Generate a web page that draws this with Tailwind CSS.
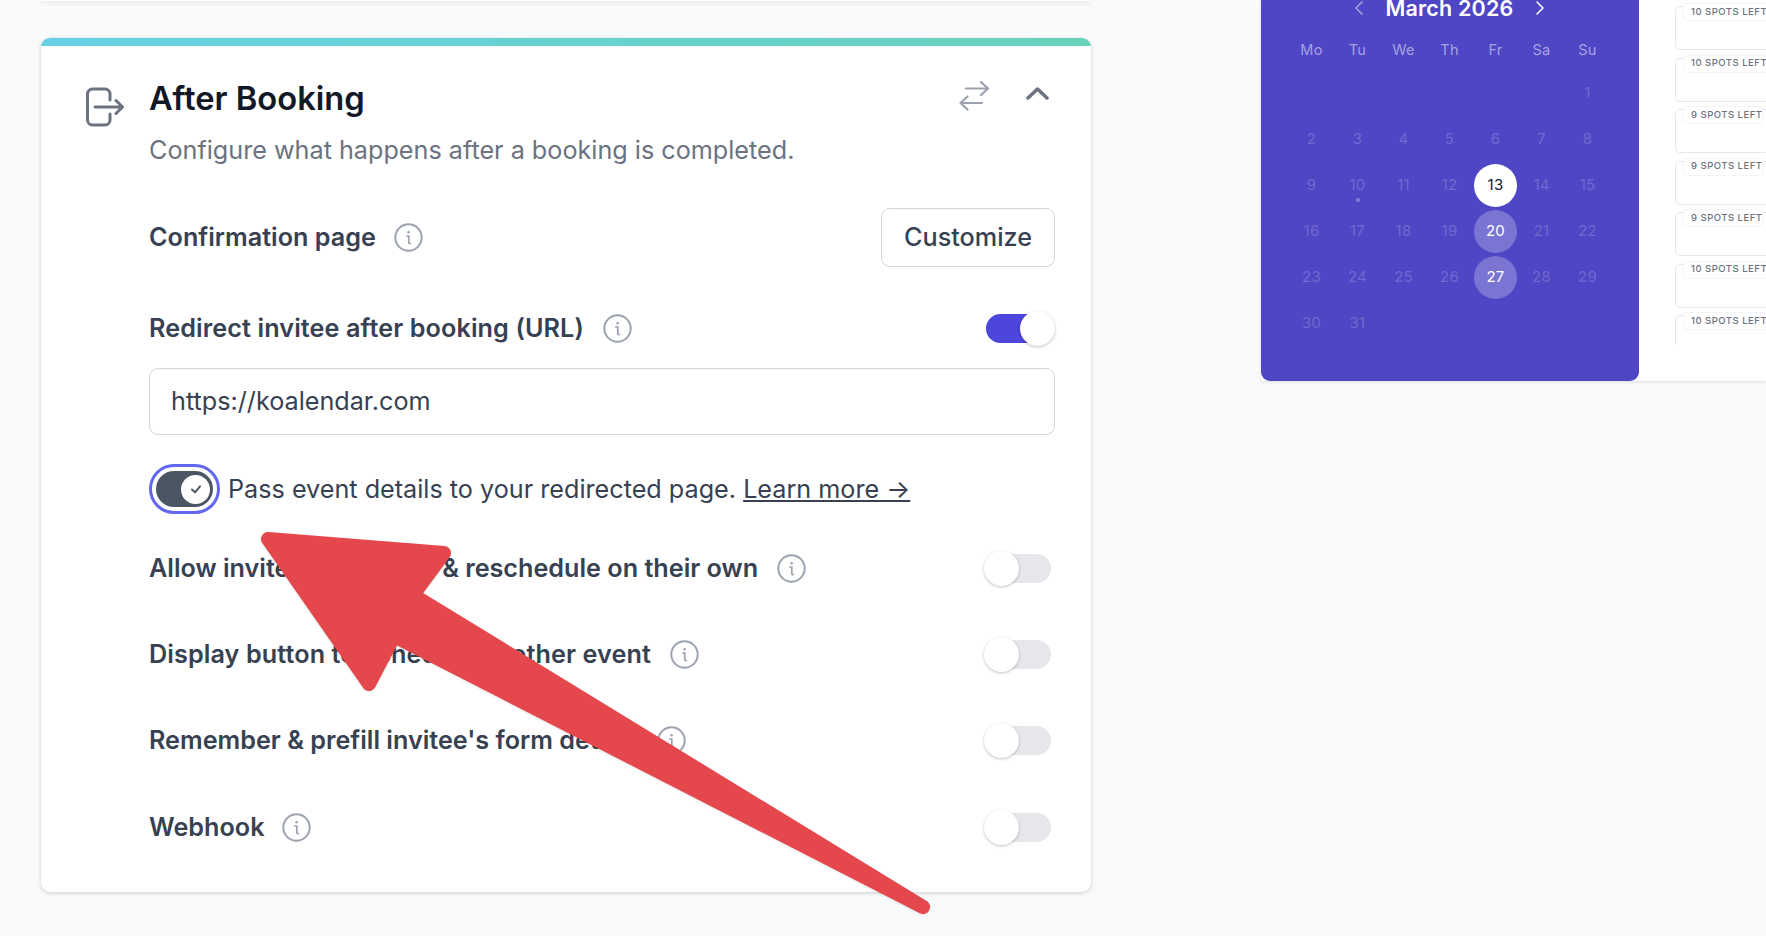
<!DOCTYPE html>
<html lang="en">
<head>
  <meta charset="UTF-8" />
  <title>After Booking</title>
  <script src="https://cdn.jsdelivr.net/npm/@tailwindcss/browser@4"></script>
</head>
<body class="relative h-[936px] w-[1766px] overflow-hidden bg-[#f9fafb] font-['Inter',sans-serif]">

  <svg class="hidden">
    <symbol id="info" viewBox="0 0 29 29">
      <circle cx="14.5" cy="14.5" r="13.2" fill="none" stroke="#9ca3af" stroke-width="2" />
      <circle cx="14.6" cy="9.2" r="1.3" fill="#9ca3af" />
      <path d="M12.8 13h2v6.4q0 1.4 1.6 1.1" fill="none" stroke="#9ca3af" stroke-width="1.7" stroke-linecap="round" />
    </symbol>
  </svg>

  <div class="flex">
    <!-- left column -->
    <div class="ml-[41px] w-[1050px] shrink-0">
      <div class="h-px rounded-b-[9px] bg-white shadow-[0_1px_4px_rgba(0,0,0,0.22)]"></div>

      <section class="mt-[37px] overflow-hidden rounded-[9px] bg-white shadow-[0_1px_4px_rgba(0,0,0,0.18)]">
        <div class="h-2 bg-gradient-to-r from-[#67d0e4] to-[#68d3bb]"></div>
        <div class="pl-[45px] pr-[36px] pt-[33px] pb-[47px]">

          <div class="flex">
            <svg class="mt-[8px] h-[40px] w-[38px] shrink-0" viewBox="0 0 38 40" fill="none" stroke="#6b7280" stroke-width="3" stroke-linecap="round" stroke-linejoin="round">
              <path d="M24 13V7a5 5 0 0 0-5-5H6.500a5 5 0 0 0-5 5v26a5 5 0 0 0 5 5H19a5 5 0 0 0 5-5v-6" />
              <path d="M9 20h27M30 13.500l6.500 6.500-6.500 6.500" />
            </svg>
            <div class="ml-[25px] flex-1">
              <div class="flex items-start justify-between">
                <h1 class="text-[32.700px] font-semibold leading-[38px] text-[#111827]">After Booking</h1>
                <div class="flex items-start">
                  <svg class="mt-[2px] h-[30px] w-[32px]" viewBox="0 0 32 30" fill="none" stroke="#9ca3af" stroke-width="2.2" stroke-linecap="round" stroke-linejoin="round">
                    <path d="M7 7.500H29M22 1l7 6.500-7 6.500M23 22H1.500M8.500 15.500L1.500 22l7 6.500" />
                  </svg>
                  <svg class="ml-[35px] mt-[8px] mr-[6px] h-[13px] w-[23px]" viewBox="0 0 23 13" fill="none" stroke="#6b7280" stroke-width="3.500" stroke-linecap="round" stroke-linejoin="round">
                    <path d="M2 11l9.500-9 9.500 9" />
                  </svg>
                </div>
              </div>
              <p class="mt-[14px] text-[25.200px] font-normal leading-[38px] text-[#6b7280]">Configure what happens after a booking is completed.</p>
            </div>
          </div>

          <div class="pl-[63px]">
            <div class="mt-[39px] flex h-[59px] items-center justify-between">
              <div class="flex items-center gap-[18px]">
                <span class="text-[25.200px] font-semibold text-[#374151]">Confirmation page</span>
                <svg class="size-[29px]"><use href="#info" /></svg>
              </div>
              <button class="h-[59px] w-[174px] rounded-[9px] border border-[#d1d5db] bg-white text-[25.200px] font-medium text-[#374151]">Customize</button>
            </div>

            <div class="mt-[43px] flex h-[36px] items-center justify-between">
              <div class="flex items-center gap-[19px]">
                <span class="mt-[2px] text-[25.200px] font-semibold tracking-[0.1px] text-[#374151]">Redirect invitee after booking (URL)</span>
                <svg class="size-[29px]"><use href="#info" /></svg>
              </div>
              <div class="mr-[4px] flex h-[29px] w-[65px] items-center justify-end rounded-full bg-[#4d46dc]">
                <div class="-mr-[4px] size-[35px] rounded-full bg-white shadow-[0_1px_3px_rgba(0,0,0,0.25)]"></div>
              </div>
            </div>

            <div class="mt-[22px] flex h-[67px] items-center rounded-[9px] border border-[#d1d5db] bg-white pl-[21px] text-[25.200px] text-[#374151]">https://koalendar.com</div>

            <div class="mt-[29px] flex h-[50px] items-center">
              <div class="rounded-full border-[3px] border-[#6366f1] p-[4px]">
                <div class="flex h-[36px] w-[57px] items-center justify-end rounded-full bg-[#4b5563] pr-[3px]">
                  <div class="flex size-[29px] items-center justify-center rounded-full bg-white">
                    <svg class="size-[14px]" viewBox="0 0 14 14" fill="none" stroke="#4b5563" stroke-width="2" stroke-linecap="round" stroke-linejoin="round"><path d="M3 7.500l3 2.800 5-6" /></svg>
                  </div>
                </div>
              </div>
              <p class="ml-[8px] mt-[2px] text-[25.200px] text-[#374151]">Pass event details to your redirected page. <a class="underline">Learn more →</a></p>
            </div>

            <div class="mt-[36px] flex h-[36px] items-center justify-between">
              <div class="flex items-center gap-[19px]">
                <span class="mt-[2px] text-[25.200px] font-semibold text-[#374151]">Allow invitees to cancel &amp; reschedule on their own</span>
                <svg class="size-[29px]"><use href="#info" /></svg>
              </div>
              <div class="mr-[4px] flex h-[29px] w-[65px] items-center rounded-full bg-[#e5e7eb]">
                <div class="-ml-[2px] size-[35px] rounded-full bg-white shadow-[0_1px_3px_rgba(0,0,0,0.25)]"></div>
              </div>
            </div>

            <div class="mt-[50px] flex h-[36px] items-center justify-between">
              <div class="flex items-center gap-[19px]">
                <span class="mt-[2px] text-[25.200px] font-semibold tracking-[0.1px] text-[#374151]">Display button to schedule another event</span>
                <svg class="size-[29px]"><use href="#info" /></svg>
              </div>
              <div class="mr-[4px] flex h-[29px] w-[65px] items-center rounded-full bg-[#e5e7eb]">
                <div class="-ml-[2px] size-[35px] rounded-full bg-white shadow-[0_1px_3px_rgba(0,0,0,0.25)]"></div>
              </div>
            </div>

            <div class="mt-[50px] flex h-[36px] items-center justify-between">
              <div class="flex items-center gap-[17px]">
                <span class="mt-[2px] text-[25.200px] font-semibold text-[#374151]">Remember &amp; prefill invitee's form details</span>
                <svg class="size-[29px]"><use href="#info" /></svg>
              </div>
              <div class="mr-[4px] flex h-[29px] w-[65px] items-center rounded-full bg-[#e5e7eb]">
                <div class="-ml-[2px] size-[35px] rounded-full bg-white shadow-[0_1px_3px_rgba(0,0,0,0.25)]"></div>
              </div>
            </div>

            <div class="mt-[51px] flex h-[36px] items-center justify-between">
              <div class="flex items-center gap-[18px]">
                <span class="mt-[2px] text-[25.200px] font-semibold text-[#374151]">Webhook</span>
                <svg class="size-[29px]"><use href="#info" /></svg>
              </div>
              <div class="mr-[4px] flex h-[29px] w-[65px] items-center rounded-full bg-[#e5e7eb]">
                <div class="-ml-[2px] size-[35px] rounded-full bg-white shadow-[0_1px_3px_rgba(0,0,0,0.25)]"></div>
              </div>
            </div>
          </div>
        </div>
      </section>
    </div>

    <!-- booking page preview -->
    <div class="ml-[170px] flex h-[381px] flex-1 overflow-hidden bg-white shadow-[0_1px_3px_rgba(0,0,0,0.12)]">
      <div class="h-[381px] w-[378px] shrink-0 rounded-b-[9px] bg-[#4e46c4] pl-[27.500px]">
        <div class="-mt-[7px] flex h-[30px] w-[322px] items-center justify-center text-white">
          <svg class="h-[14px] w-[8px] opacity-50" viewBox="0 0 8 14" fill="none" stroke="#fff" stroke-width="1.5" stroke-linecap="round" stroke-linejoin="round"><path d="M7 1L1 7l6 6" /></svg>
          <span class="mx-[22px] text-[21.500px] font-semibold tracking-[0.2px]">March 2026</span>
          <svg class="h-[14px] w-[8px]" viewBox="0 0 8 14" fill="none" stroke="#fff" stroke-width="1.5" stroke-linecap="round" stroke-linejoin="round"><path d="M1 1l6 6-6 6" /></svg>
        </div>
        <div class="mt-[8px] grid h-[38px] w-[322px] grid-cols-7 items-center text-center text-[14.500px] font-normal tracking-[0.3px] text-white/50">
          <span>Mo</span><span>Tu</span><span>We</span><span>Th</span><span>Fr</span><span>Sa</span><span>Su</span>
        </div>
        <div class="grid w-[322px] grid-cols-7 auto-rows-[46px] items-center justify-items-center pt-[1px] text-[15px] tracking-[0.2px] text-white/20">
          <span></span><span></span><span></span><span></span><span></span><span></span><span>1</span>
          <span>2</span><span>3</span><span>4</span><span>5</span><span>6</span><span>7</span><span>8</span>
          <span>9</span>
          <span class="relative">10<i class="absolute -bottom-[6px] left-1/2 size-[4px] -translate-x-1/2 rounded-full bg-white/30"></i></span>
          <span>11</span><span>12</span>
          <span class="flex size-[43px] items-center justify-center rounded-full bg-white text-[#111827]">13</span>
          <span>14</span><span>15</span>
          <span>16</span><span>17</span><span>18</span><span>19</span>
          <span class="flex size-[43px] items-center justify-center rounded-full bg-white/25 text-white">20</span>
          <span>21</span><span>22</span>
          <span>23</span><span>24</span><span>25</span><span>26</span>
          <span class="flex size-[43px] items-center justify-center rounded-full bg-white/25 text-white">27</span>
          <span>28</span><span>29</span>
          <span>30</span><span>31</span>
        </div>
      </div>

      <div class="ml-[36px] flex h-[345px] w-[200px] shrink-0 flex-col gap-[7.500px] overflow-hidden pt-[6px]">
        <div class="h-[44px] shrink-0 rounded-[5px] border border-[#e5e7eb]"><span class="-mt-[4px] ml-[7px] flex h-[18px] w-[90px] items-center whitespace-nowrap rounded-[4px] border border-[#f3f4f6] bg-white pl-[7px] text-[9.500px] font-medium tracking-[0.5px] text-[#6b7280]">10 SPOTS LEFT</span></div>
        <div class="h-[44px] shrink-0 rounded-[5px] border border-[#e5e7eb]"><span class="-mt-[4px] ml-[7px] flex h-[18px] w-[90px] items-center whitespace-nowrap rounded-[4px] border border-[#f3f4f6] bg-white pl-[7px] text-[9.500px] font-medium tracking-[0.5px] text-[#6b7280]">10 SPOTS LEFT</span></div>
        <div class="h-[44px] shrink-0 rounded-[5px] border border-[#e5e7eb]"><span class="-mt-[4px] ml-[7px] flex h-[18px] w-[80px] items-center whitespace-nowrap rounded-[4px] border border-[#f3f4f6] bg-white pl-[7px] text-[9.500px] font-medium tracking-[0.5px] text-[#6b7280]">9 SPOTS LEFT</span></div>
        <div class="h-[44px] shrink-0 rounded-[5px] border border-[#e5e7eb]"><span class="-mt-[4px] ml-[7px] flex h-[18px] w-[80px] items-center whitespace-nowrap rounded-[4px] border border-[#f3f4f6] bg-white pl-[7px] text-[9.500px] font-medium tracking-[0.5px] text-[#6b7280]">9 SPOTS LEFT</span></div>
        <div class="h-[44px] shrink-0 rounded-[5px] border border-[#e5e7eb]"><span class="-mt-[4px] ml-[7px] flex h-[18px] w-[80px] items-center whitespace-nowrap rounded-[4px] border border-[#f3f4f6] bg-white pl-[7px] text-[9.500px] font-medium tracking-[0.5px] text-[#6b7280]">9 SPOTS LEFT</span></div>
        <div class="h-[44px] shrink-0 rounded-[5px] border border-[#e5e7eb]"><span class="-mt-[4px] ml-[7px] flex h-[18px] w-[90px] items-center whitespace-nowrap rounded-[4px] border border-[#f3f4f6] bg-white pl-[7px] text-[9.500px] font-medium tracking-[0.5px] text-[#6b7280]">10 SPOTS LEFT</span></div>
        <div class="h-[44px] shrink-0 rounded-[5px] border border-[#e5e7eb]"><span class="-mt-[4px] ml-[7px] flex h-[18px] w-[90px] items-center whitespace-nowrap rounded-[4px] border border-[#f3f4f6] bg-white pl-[7px] text-[9.500px] font-medium tracking-[0.5px] text-[#6b7280]">10 SPOTS LEFT</span></div>
      </div>
    </div>
  </div>

  <!-- red annotation arrow over the page -->
  <svg class="absolute left-0 top-0 h-[936px] w-[1766px] drop-shadow-[0_1px_1px_rgba(0,0,0,0.1)]" viewBox="0 0 1766 936">
    <polygon points="268,539 444,553 413,595 923,907 394,636 369,684" fill="#e5484c" stroke="#e5484c" stroke-width="14" stroke-linejoin="round" />
  </svg>
</body>
</html>
